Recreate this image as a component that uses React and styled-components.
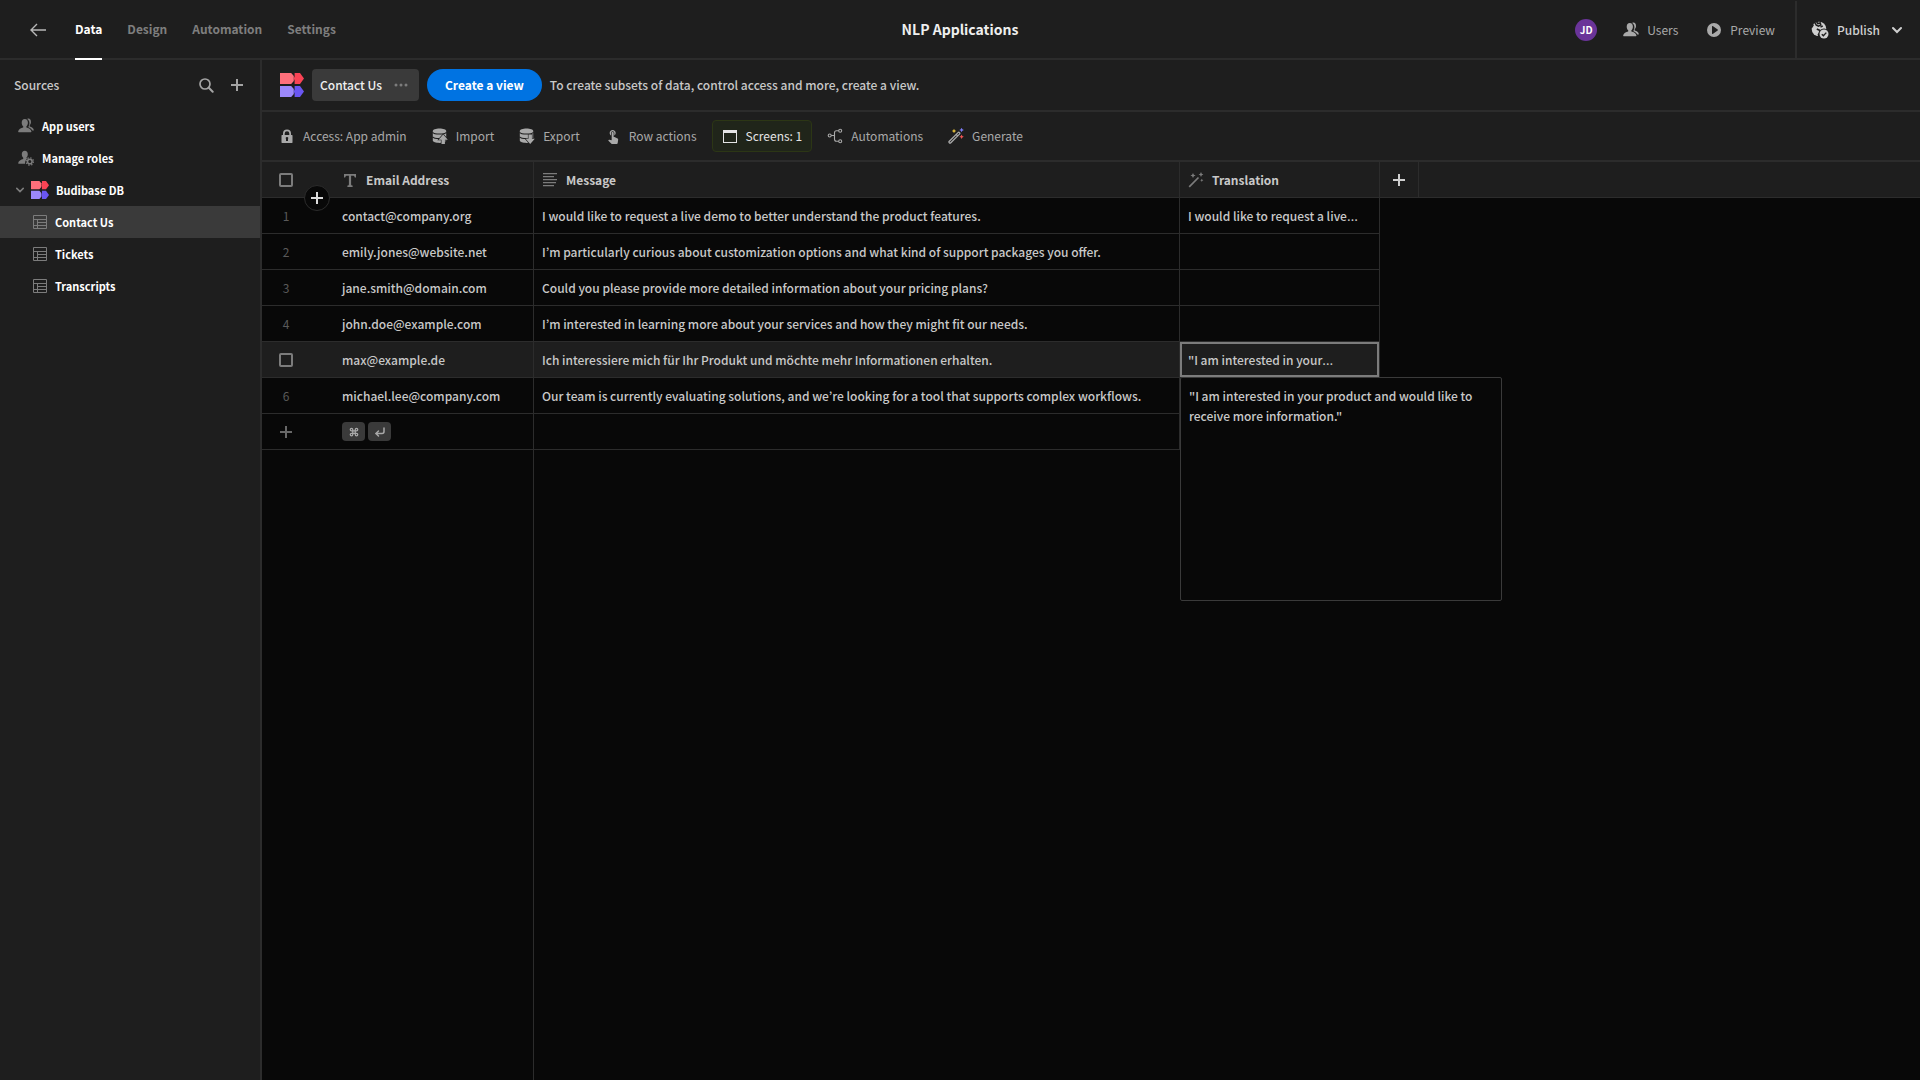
import React, { useState } from 'react';
import styled, { createGlobalStyle, css } from 'styled-components';
import { MdTouchApp } from 'react-icons/md';
import { Command, CornerDownLeft } from 'lucide-react';

const GlobalStyle = createGlobalStyle`
  * {
    box-sizing: border-box;
  }

  body {
    margin: 0;
    background: #080808;
    color: #c8c8c8;
    font-family: 'Noto Sans CJK KR', 'Noto Sans', sans-serif;
    font-size: 12px;
    line-height: 20px;
  }

  button,
  textarea {
    font: inherit;
    color: inherit;
  }
`;

const line = '#2c2c2c';
const panel = '#1e1e1e';

/* ---------- icons ---------- */

const Svg = styled.svg`
  display: block;
  flex: none;
  fill: currentColor;
`;

const Icon = ({ size = 16, box = 16, children }) => (
  <Svg width={size} height={size} viewBox={`0 0 ${box} ${box}`} aria-hidden="true">
    {children}
  </Svg>
);

const Logo = ({ size }) => (
  <Icon size={size} box={24}>
    <path fill="#ff6f7b" d="M0 0h11.2l2.6 3v5l-2.6 3H0z" />
    <path fill="#fa4355" d="M14.6 0H20l4 5.5-4 5.5h-5.4V7.500l-.8-2 .8-2z" />
    <path fill="#9c88fb" d="M0 13h11.2l2.6 3v5l-2.6 3H0z" />
    <path fill="#6a56f2" d="M14.6 13H20l4 5.5-4 5.5h-5.4v-3.500l-.8-2 .8-2z" />
  </Icon>
);

const PlusIcon = ({ size = 12 }) => (
  <Icon size={size} box={12}>
    <path d="M5 0h2v5h5v2H7v5H5V7H0V5h5z" />
  </Icon>
);

const BackIcon = () => (
  <Icon>
    <path d="M7 2 1 8l6 6M1 8h15" fill="none" stroke="currentColor" strokeWidth="1.4" />
  </Icon>
);

const SearchIcon = () => (
  <Icon>
    <circle cx="7" cy="7" r="5" fill="none" stroke="currentColor" strokeWidth="1.7" />
    <path d="m10.8 10.8 3.9 3.9" stroke="currentColor" strokeWidth="2" strokeLinecap="round" />
  </Icon>
);

const ChevronIcon = ({ size = 10, width = 2 }) => (
  <Icon size={size} box={10}>
    <path d="m1 3 4 4 4-4" fill="none" stroke="currentColor" strokeWidth={width} strokeLinecap="round" />
  </Icon>
);

const UsersIcon = () => (
  <Icon>
    <path d="M6.8 1C4.8 1 3.7 2.6 3.7 4.7c0 1.5.6 2.8 1.5 3.6v1.2C3 10.1.5 11.3.2 13.3c-.1.5.1.9.5.9h12.2c.4 0 .6-.4.5-.9-.3-2-2.8-3.2-5-3.8V8.300C9.300 7.500 9.900 6.200 9.900 4.700 9.900 2.600 8.800 1 6.800 1z" />
    <path d="M9.2.9C9.600.7 10 .6 10.4.6c1.7 0 2.6 1.4 2.6 3.3 0 1.4-.5 2.5-1.3 3.2v1.4c2 .6 3.9 1.7 4.1 3.4.1.4-.1.7-.4.7h-1c-.9-1.700-2.500-2.700-4-3.300v-.6c.6-1 1-2.400 1-3.800 0-1.700-.7-3.200-2.200-4z" />
  </Icon>
);

const RolesIcon = () => (
  <Icon>
    <path d="M6.8.8C4.900.8 3.800 2.300 3.800 4.300c0 1.500.5 2.700 1.400 3.500V9C3 9.600.5 10.800.2 13c-.1.500.1.800.5.800h6.400c-.2-2.300.5-4.100 2.300-5.200L8.400 8.300v-.5c.9-.8 1.400-2 1.400-3.500 0-2-1.100-3.500-3-3.500z" />
    <circle cx="11.8" cy="11.5" r="2.3" fill="none" stroke="currentColor" strokeWidth="1.6" />
    <circle cx="11.8" cy="11.5" r="3.7" fill="none" stroke="currentColor" strokeWidth="1.3" strokeDasharray="1.4 1.506" />
  </Icon>
);

const TableIcon = () => (
  <Icon size={14} box={14}>
    <path d="M.5.5h13v13H.5zM.5 4.5h13M4.5 7.5h9M.5 10.5h13M4.5 4.5v9" fill="none" stroke="currentColor" />
  </Icon>
);

const PlayIcon = () => (
  <Icon>
    <path fillRule="evenodd" d="M8 1a7 7 0 1 0 0 14A7 7 0 0 0 8 1zM6 4.5c0-.4.4-.6.7-.4l5 3.5c.3.2.3.6 0 .8l-5 3.5c-.3.2-.7 0-.7-.4z" />
  </Icon>
);

const PublishIcon = () => (
  <Icon size={18} box={18}>
    <circle cx="8" cy="8" r="7.3" />
    <path
      d="M5.2.2l1.6 2.4 2.4-.6.6 1.8-2.3 1.4-2.2-1L3.800 1.500M9.500 6.200l2.300-1.400M5.800 8l2.600 1.200 1.200 2.200-2.200 2.200L8 16M.8 6.500l1.500-2.800"
      fill="none"
      stroke={panel}
      strokeWidth="1.5"
    />
    <circle cx="13" cy="13" r="5.6" fill={panel} />
    <circle cx="13" cy="13" r="4.5" />
    <path d="m10.8 13.2 1.6 1.6 2.9-3.2" fill="none" stroke={panel} strokeWidth="1.4" />
  </Icon>
);

const LockIcon = () => (
  <Icon>
    <path fillRule="evenodd" d="M13 7h-1V5.5a4 4 0 0 0-8 0V7H3a.5.5 0 0 0-.5.5v7c0 .3.2.5.5.5h10c.3 0 .5-.2.5-.5v-7A.5.5 0 0 0 13 7zM5.7 5.5a2.3 2.3 0 0 1 4.6 0V7H5.7zM9 11.1V13H7v-1.9a1.3 1.3 0 1 1 2 0z" />
  </Icon>
);

const DataIcon = ({ down }) => (
  <Icon>
    <path d="M.8 3C.8 1.6 3.8.6 7.5.6s6.7 1 6.7 2.4v9.5c0 1.4-3 2.4-6.7 2.4S.8 13.9.8 12.5z" />
    <path d="M.5 4.3c1 1.1 3.7 1.7 7 1.7s6-.6 7-1.7M.5 8.8c1 1.1 3.7 1.7 7 1.7" fill="none" stroke={panel} strokeWidth="1.2" />
    <path
      d={down ? 'M9.5 6.500h3.400v4.300h2.900L11.200 16l-4.600-5.200h2.900z' : 'M9.5 16h3.400v-4.300h2.900L11.200 6.500l-4.600 5.200h2.900z'}
      stroke={panel}
      strokeWidth="1.2"
      paintOrder="stroke"
    />
  </Icon>
);

const WindowIcon = () => (
  <Icon>
    <path fillRule="evenodd" d="M1 2h14v13H1zm1 3v9h12V5z" />
  </Icon>
);

const BranchIcon = () => (
  <Icon>
    <g fill="none" stroke="currentColor" strokeWidth="1.1">
      <circle cx="2.7" cy="7.5" r="1.5" />
      <circle cx="13.2" cy="2.7" r="1.5" />
      <circle cx="13.2" cy="13.2" r="1.5" />
      <path d="M4.2 7.5h3.3M11.7 2.7H9.500c-1.200 0-2 .8-2 2v6.500c0 1.200.8 2 2 2h2.200" />
    </g>
  </Icon>
);

const star = (x, y, r) =>
  `M${x} ${y - r}L${x + r / 3} ${y - r / 3}L${x + r} ${y}L${x + r / 3} ${y + r / 3}L${x} ${y + r}L${x - r / 3} ${y + r / 3}L${x - r} ${y}L${x - r / 3} ${y - r / 3}Z`;

const GenerateIcon = () => (
  <Icon>
    <path
      d="M1.3 13.3 10 4.6c.5-.5 1-.5 1.5 0s.5 1 0 1.5l-8.7 8.7c-.5.5-1 .5-1.5 0s-.5-1 0-1.5zM8.2 6.4l1.5 1.5"
      fill="none"
      stroke="currentColor"
      strokeWidth="1.3"
    />
    <path fill="#e8c13c" d={star(6, 3, 2.2)} />
    <path fill="#7b7cf5" d={star(13.6, 2, 2.3)} />
    <path fill="#f05454" d={star(13.6, 8.8, 2.2)} />
  </Icon>
);

const WandIcon = () => (
  <Icon>
    <path d="m1.2 14.8 9.3-9.3" stroke="currentColor" strokeWidth="1.7" />
    <path d={star(5, 3.5, 2.6)} />
    <path d={star(13, 2.5, 2.4)} />
    <path d={star(13.8, 8.3, 1.6)} />
  </Icon>
);

const TextIcon = () => (
  <Icon>
    <path d="M2 2h12v3.5h-1.2C12.6 4.2 12 3.7 11 3.7H9.1v8.6c0 .9.5 1.3 1.5 1.3V15H5.4v-1.4c1 0 1.5-.4 1.5-1.3V3.7H5c-1 0-1.6.5-1.8 1.8H2z" />
  </Icon>
);

const ParagraphIcon = () => (
  <Icon>
    <path d="M1 1h14v1.3H1zM1 4h11v1.3H1zM1 7h14v1.3H1zM1 10h13v1.3H1zM1 13h11v1.3H1z" />
  </Icon>
);

/* ---------- top bar ---------- */

const Page = styled.div`
  display: flex;
  flex-direction: column;
  min-height: 100vh;
`;

const TopBar = styled.header`
  display: grid;
  grid-template-columns: 1fr auto 1fr;
  height: 60px;
  background: ${panel};
  border-bottom: 2px solid ${line};
`;

const Tabs = styled.nav`
  display: flex;
  align-items: stretch;
  gap: 25px;
  padding-left: 30px;
`;

const BackLink = styled.a`
  display: flex;
  align-items: center;
  padding-right: 4px;
  color: #b8b8b8;
`;

const Tab = styled.a`
  display: flex;
  align-items: center;
  height: 60px;
  padding-bottom: 2px;
  color: #7e7e7e;
  font-weight: 700;
  text-decoration: none;
  ${props =>
    props.$active &&
    css`
      color: #fff;
      border-bottom: 2px solid #fff;
      padding-bottom: 0;
    `}
`;

const Title = styled.h1`
  margin: 0;
  padding-bottom: 2px;
  align-self: center;
  color: #efefef;
  font-size: 14px;
  font-weight: 700;
`;

const TopActions = styled.div`
  display: flex;
  justify-content: flex-end;
  align-items: center;
  gap: 26px;
`;

const Avatar = styled.span`
  display: grid;
  place-items: center;
  width: 22px;
  height: 22px;
  border-radius: 50%;
  background: #6a3499;
  color: #fff;
  font-size: 10px;
  font-weight: 700;
`;

const TopButton = styled.button`
  display: flex;
  align-items: center;
  gap: 8px;
  padding: 0 2px 0 0;
  border: 0;
  background: none;
  color: #a9a9a9;
`;

const PublishButton = styled(TopButton)`
  height: 58px;
  padding: 0 18px 0 14px;
  margin-left: -8px;
  border-left: 2px solid ${line};
  color: #cfcfcf;
  font-weight: 500;
`;

const ButtonText = styled.span`
  padding-right: 4px;
`;

/* ---------- sidebar ---------- */

const Body = styled.div`
  display: flex;
  flex: 1;
`;

const Sidebar = styled.aside`
  flex: none;
  width: 262px;
  background: ${panel};
  border-right: 2px solid ${line};
`;

const SidebarHeader = styled.div`
  display: flex;
  align-items: center;
  gap: 17px;
  height: 50px;
  padding: 0 17px 0 14px;
`;

const SidebarTitle = styled.h2`
  flex: 1;
  margin: 0;
  font-size: 12px;
  font-weight: 500;
`;

const IconButton = styled.button`
  display: grid;
  place-items: center;
  padding: 0;
  border: 0;
  background: none;
  color: #a4a4a4;
`;

const NavItem = styled.a`
  display: flex;
  align-items: center;
  gap: ${props => props.$gap || 8}px;
  height: 32px;
  padding-left: ${props => props.$indent || 18}px;
  background: ${props => (props.$selected ? '#3a3a3a' : 'none')};
  color: #fff;
  font-size: 11px;
  font-weight: 700;
  text-decoration: none;

  svg {
    color: #7c7c7c;
  }
`;

/* ---------- toolbars ---------- */

const Main = styled.main`
  display: flex;
  flex: 1;
  flex-direction: column;
  min-width: 0;
`;

const ViewBar = styled.div`
  display: flex;
  align-items: center;
  gap: 8px;
  height: 52px;
  padding: 0 18px;
  background: ${panel};
  border-bottom: 2px solid ${line};
  font-weight: 500;
`;

const ViewTab = styled.button`
  display: flex;
  align-items: center;
  gap: 12px;
  height: 32px;
  padding: 0 11px 0 8px;
  border: 0;
  border-radius: 4px;
  background: #3a3a3a;
  color: #efefef;

  svg {
    color: #7c7c7c;
  }
`;

const CallToAction = styled.button`
  height: 32px;
  padding: 0 18px;
  border: 0;
  border-radius: 16px;
  background: #0073e2;
  color: #fff;
  font-weight: 700;
`;

const ToolBar = styled.div`
  display: flex;
  align-items: center;
  gap: 5px;
  height: 50px;
  padding: 0 7px;
  background: ${panel};
  border-bottom: 2px solid ${line};
`;

const ToolButton = styled.button`
  display: flex;
  align-items: center;
  gap: 8px;
  height: 32px;
  padding: 0 9px;
  border: 1px solid transparent;
  border-radius: 4px;
  background: none;
  color: #a9a9a9;
  white-space: nowrap;
  ${props =>
    props.$highlight &&
    css`
      border-color: #2c3615;
      background: #20251a;
      color: #e4e4e4;
    `}
`;

/* ---------- grid ---------- */

const Grid = styled.div`
  display: flex;
  flex: 1;
  flex-direction: column;
  background: #080808;
`;

const Table = styled.table`
  width: 100%;
  table-layout: fixed;
  border-collapse: separate;
  border-spacing: 0;
`;

const Col = styled.col`
  width: ${props => props.$width}px;
`;

const HeadCell = styled.th`
  position: relative;
  height: 36px;
  padding: 0 8px;
  background: ${panel};
  border-bottom: 1px solid ${line};
  border-right: ${props => (props.$plain ? 0 : 1)}px solid ${line};
  text-align: left;
  font-weight: 700;
`;

const HeadLabel = styled.span`
  display: flex;
  align-items: center;
  gap: 8px;

  svg {
    color: #7c7c7c;
  }
`;

const Row = styled.tr`
  background: ${props => (props.$hover ? panel : '#080808')};
`;

const Cell = styled.td`
  position: relative;
  height: 36px;
  padding: 0 8px;
  border-bottom: 1px solid ${line};
  border-right: ${props => (props.$plain ? 0 : 1)}px solid ${line};
  font-weight: 500;
  white-space: nowrap;
  ${props =>
    props.$selected &&
    css`
      box-shadow: inset 0 0 0 2px #7c7c7c;
    `}
`;

const Blank = styled.td`
  background: #080808;
`;

const GutterCell = styled(Cell)`
  padding-left: 17px;
  color: #5a5a5a;
  font-weight: 400;
`;

const RowNumber = styled.span`
  display: block;
  width: 14px;
  text-align: center;
`;

/* the CJK face centres its dots, so they come from a Latin one */
const Dots = styled.span`
  font-family: Inter, sans-serif;
  line-height: 1;
`;

const Checkbox = styled.input`
  appearance: none;
  display: block;
  width: 14px;
  height: 14px;
  margin: 0 0 0 ${props => props.$inset || 0}px;
  border: 2px solid #7c7c7c;
  border-radius: 2px;
`;

const AddRowButton = styled.button`
  position: absolute;
  z-index: 1;
  right: 4px;
  bottom: -14px;
  display: grid;
  place-items: center;
  width: 26px;
  height: 26px;
  padding: 0;
  border: 1px solid ${line};
  border-radius: 50%;
  background: #080808;
  color: #dcdcdc;
`;

const AddColumnButton = styled(IconButton)`
  width: 100%;
  color: #d0d0d0;
`;

const NewRowButton = styled(IconButton)`
  width: 14px;
  color: #686868;
`;

const Keys = styled.div`
  display: flex;
  gap: 3px;
`;

const Key = styled.kbd`
  display: grid;
  place-items: center;
  width: 23px;
  height: 19px;
  border-radius: 4px;
  background: #3a3a3a;
  color: #a9a9a9;
`;

const Editor = styled.textarea`
  position: absolute;
  z-index: 2;
  top: 35px;
  left: 0;
  width: 322px;
  height: 224px;
  padding: 8px;
  border: 1px solid #3a3a3a;
  border-radius: 2px;
  outline: 0;
  resize: none;
  background: #080808;
  color: #c8c8c8;
`;

const GutterLine = styled.div`
  flex: 1;
  width: 272px;
  border-right: 1px solid ${line};
`;

const tools = [
  { label: 'Access: App admin', icon: <LockIcon /> },
  { label: 'Import', icon: <DataIcon /> },
  { label: 'Export', icon: <DataIcon down /> },
  { label: 'Row actions', icon: <MdTouchApp size={16} /> },
  { label: 'Screens: 1', icon: <WindowIcon />, highlight: true },
  { label: 'Automations', icon: <BranchIcon /> },
  { label: 'Generate', icon: <GenerateIcon /> },
];

const rows = [
  {
    email: 'contact@company.org',
    message: 'I would like to request a live demo to better understand the product features.',
    translation: 'I would like to request a live demo to better understand the product features.',
  },
  {
    email: 'emily.jones@website.net',
    message: 'I’m particularly curious about customization options and what kind of support packages you offer.',
  },
  {
    email: 'jane.smith@domain.com',
    message: 'Could you please provide more detailed information about your pricing plans?',
  },
  {
    email: 'john.doe@example.com',
    message: 'I’m interested in learning more about your services and how they might fit our needs.',
  },
  {
    email: 'max@example.de',
    message: 'Ich interessiere mich für Ihr Produkt und möchte mehr Informationen erhalten.',
    translation: '"I am interested in your product and would like to receive more information."',
  },
  {
    email: 'michael.lee@company.com',
    message: 'Our team is currently evaluating solutions, and we’re looking for a tool that supports complex workflows.',
  },
];

const tables = ['Contact Us', 'Tickets', 'Transcripts'];

const Preview = ({ text = '', limit = 31 }) => {
  if (text.length <= limit) return text;
  return (
    <>
      {text.slice(0, text.lastIndexOf(' ', limit))}
      <Dots>…</Dots>
    </>
  );
};

const DataGrid = () => {
  const [values, setValues] = useState(rows);
  const active = 4;

  const updateTranslation = e => {
    const next = values.slice();
    next[active] = { ...next[active], translation: e.target.value };
    setValues(next);
  };

  return (
    <Grid>
      <Table>
        <colgroup>
          <Col $width={72} />
          <Col $width={200} />
          <Col $width={646} />
          <Col $width={200} />
          <Col $width={39} />
          <col />
        </colgroup>
        <thead>
          <tr>
            <HeadCell $plain>
              <Checkbox type="checkbox" aria-label="Select all rows" $inset={9} />
              <AddRowButton aria-label="Add row">
                <PlusIcon />
              </AddRowButton>
            </HeadCell>
            <HeadCell>
              <HeadLabel>
                <TextIcon />
                Email Address
              </HeadLabel>
            </HeadCell>
            <HeadCell>
              <HeadLabel>
                <ParagraphIcon />
                Message
              </HeadLabel>
            </HeadCell>
            <HeadCell>
              <HeadLabel>
                <WandIcon />
                Translation
              </HeadLabel>
            </HeadCell>
            <HeadCell>
              <AddColumnButton aria-label="Add column">
                <PlusIcon />
              </AddColumnButton>
            </HeadCell>
            <HeadCell $plain />
          </tr>
        </thead>
        <tbody>
          {values.map((row, index) => (
            <Row key={row.email} $hover={index === active}>
              <GutterCell $plain>
                {index === active ? (
                  <Checkbox type="checkbox" aria-label={`Select row ${index + 1}`} />
                ) : (
                  <RowNumber>{index + 1}</RowNumber>
                )}
              </GutterCell>
              <Cell>{row.email}</Cell>
              <Cell>{row.message}</Cell>
              <Cell $selected={index === active}>
                <Preview text={row.translation} />
                {index === active && (
                  <Editor aria-label="Translation" value={row.translation} onChange={updateTranslation} />
                )}
              </Cell>
              <Blank colSpan={2} />
            </Row>
          ))}
          <Row>
            <GutterCell $plain>
              <NewRowButton aria-label="New row">
                <PlusIcon />
              </NewRowButton>
            </GutterCell>
            <Cell>
              <Keys>
                <Key>
                  <Command size={10} strokeWidth={3} />
                </Key>
                <Key>
                  <CornerDownLeft size={12} strokeWidth={3} />
                </Key>
              </Keys>
            </Cell>
            <Cell />
            <Cell />
            <Blank colSpan={2} />
          </Row>
        </tbody>
      </Table>
      <GutterLine />
    </Grid>
  );
};

export default function App() {
  return (
    <Page>
      <GlobalStyle />
      <TopBar>
        <Tabs>
          <BackLink href="#apps" aria-label="Back">
            <BackIcon />
          </BackLink>
          <Tab href="#data" $active>
            Data
          </Tab>
          <Tab href="#design">Design</Tab>
          <Tab href="#automation">Automation</Tab>
          <Tab href="#settings">Settings</Tab>
        </Tabs>
        <Title>NLP Applications</Title>
        <TopActions>
          <Avatar>JD</Avatar>
          <TopButton>
            <UsersIcon />
            Users
          </TopButton>
          <TopButton>
            <PlayIcon />
            Preview
          </TopButton>
          <PublishButton>
            <PublishIcon />
            <ButtonText>Publish</ButtonText>
            <ChevronIcon />
          </PublishButton>
        </TopActions>
      </TopBar>
      <Body>
        <Sidebar>
          <SidebarHeader>
            <SidebarTitle>Sources</SidebarTitle>
            <IconButton aria-label="Search">
              <SearchIcon />
            </IconButton>
            <IconButton aria-label="Add source">
              <PlusIcon />
            </IconButton>
          </SidebarHeader>
          <NavItem href="#users">
            <UsersIcon />
            App users
          </NavItem>
          <NavItem href="#roles">
            <RolesIcon />
            Manage roles
          </NavItem>
          <NavItem href="#db" $indent={16} $gap={7}>
            <ChevronIcon size={8} />
            <Logo size={18} />
            Budibase DB
          </NavItem>
          {tables.map((name, index) => (
            <NavItem key={name} href={`#table-${index}`} $indent={33} $selected={index === 0}>
              <TableIcon />
              {name}
            </NavItem>
          ))}
        </Sidebar>
        <Main>
          <ViewBar>
            <Logo size={24} />
            <ViewTab>
              Contact Us
              <Icon size={14} box={14}>
                <circle cx="2" cy="7" r="1.5" />
                <circle cx="7" cy="7" r="1.5" />
                <circle cx="12" cy="7" r="1.5" />
              </Icon>
            </ViewTab>
            <CallToAction>Create a view</CallToAction>
            <span>To create subsets of data, control access and more, create a view.</span>
          </ViewBar>
          <ToolBar>
            {tools.map(tool => (
              <ToolButton key={tool.label} $highlight={tool.highlight}>
                {tool.icon}
                {tool.label}
              </ToolButton>
            ))}
          </ToolBar>
          <DataGrid />
        </Main>
      </Body>
    </Page>
  );
}
